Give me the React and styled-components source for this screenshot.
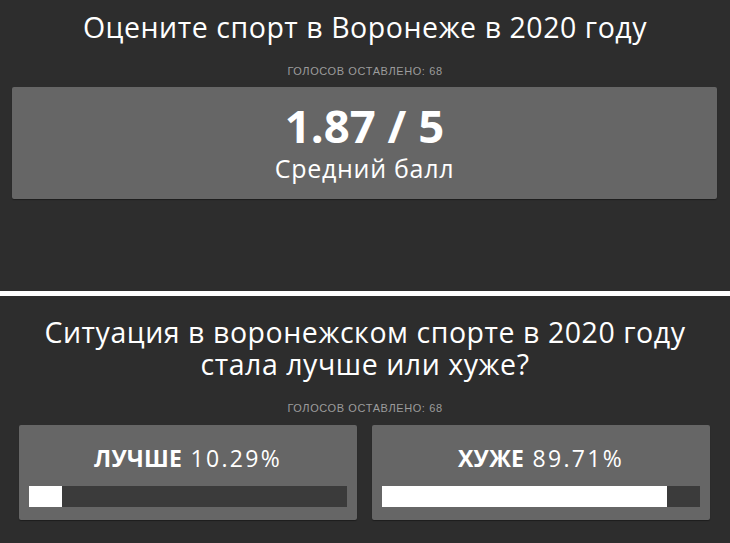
import React from "react";
import styled, { createGlobalStyle } from "styled-components";

const Global = createGlobalStyle`
  html, body { margin: 0; padding: 0; background: #ffffff; }
  body { font-family: "Open Sans", "Noto Sans", sans-serif; }
  * { box-sizing: border-box; }
`;

const Page = styled.div`
  display: flex;
  flex-direction: column;
  gap: 5px;
  width: 730px;
`;

const Section = styled.section`
  background: #2d2d2d;
  color: #ffffff;
  padding: ${(p) => p.$pad};
  min-height: ${(p) => p.$minH || "auto"};
  text-align: center;
`;

const Title = styled.h2`
  margin: 0;
  font-family: "Open Sans", sans-serif;
  font-weight: 400;
  font-size: 28.5px;
  letter-spacing: 0.55px;
  line-height: 32px;
  color: #ffffff;
`;

const Votes = styled.div`
  margin-top: 22px;
  font-family: "Liberation Sans", Arial, sans-serif;
  font-size: 11px;
  letter-spacing: 0.6px;
  line-height: 13px;
  color: #9c9c9c;
  text-transform: uppercase;
`;

const ScoreCard = styled.div`
  margin: 9px 13px 0 12px;
  background: #666666;
  border-radius: 2px;
  box-shadow: 0 1px 1px rgba(0, 0, 0, 0.35);
  padding: 14px 0 16px;
`;

const Score = styled.div`
  font-size: 45.5px;
  font-weight: 700;
  line-height: 48px;
`;

const ScoreLabel = styled.div`
  margin-top: 4px;
  font-size: 25px;
  letter-spacing: 0.7px;
  line-height: 30px;
`;

const Options = styled.div`
  margin: 10px 20px 0 19px;
  display: grid;
  grid-template-columns: 1fr 1fr;
  gap: 15px;
`;

const OptionCard = styled.div`
  background: #666666;
  border-radius: 2px;
  box-shadow: 0 1px 1px rgba(0, 0, 0, 0.35);
  padding: 19px 10px 13px;
  display: flex;
  flex-direction: column;
  gap: 14px;
`;

const OptionText = styled.div`
  font-size: 23px;
  line-height: 28px;
  font-weight: 400;
`;

const OptionLabel = styled.b`
  font-weight: 700;
  letter-spacing: 0.3px;
`;

const OptionPct = styled.span`
  letter-spacing: 2.3px;
`;

const Track = styled.div`
  height: 21px;
  background: #3b3b3b;
  display: flex;
`;

const Fill = styled.div`
  background: #ffffff;
  height: 100%;
`;

const options = [
  { label: "ЛУЧШЕ", pct: 10.29 },
  { label: "ХУЖЕ", pct: 89.71 },
];

export default function App() {
  return (
    <>
      <Global />
      <Page>
        <Section $pad="11px 0 0" $minH="291px">
          <Title>Оцените спорт в Воронеже в 2020 году</Title>
          <Votes>Голосов оставлено: 68</Votes>
          <ScoreCard>
            <Score>1.87 / 5</Score>
            <ScoreLabel>Средний балл</ScoreLabel>
          </ScoreCard>
        </Section>
        <Section $pad="20px 0 0" $minH="247px">
          <Title>
            Ситуация в воронежском спорте в 2020 году
            <br />
            стала лучше или хуже?
          </Title>
          <Votes>Голосов оставлено: 68</Votes>
          <Options>
            {options.map((o) => (
              <OptionCard key={o.label}>
                <OptionText>
                  <OptionLabel>{o.label}</OptionLabel>
                  <OptionPct> {o.pct.toFixed(2)}%</OptionPct>
                </OptionText>
                <Track>
                  <Fill style={{ width: `${o.pct}%` }} />
                </Track>
              </OptionCard>
            ))}
          </Options>
        </Section>
      </Page>
    </>
  );
}
